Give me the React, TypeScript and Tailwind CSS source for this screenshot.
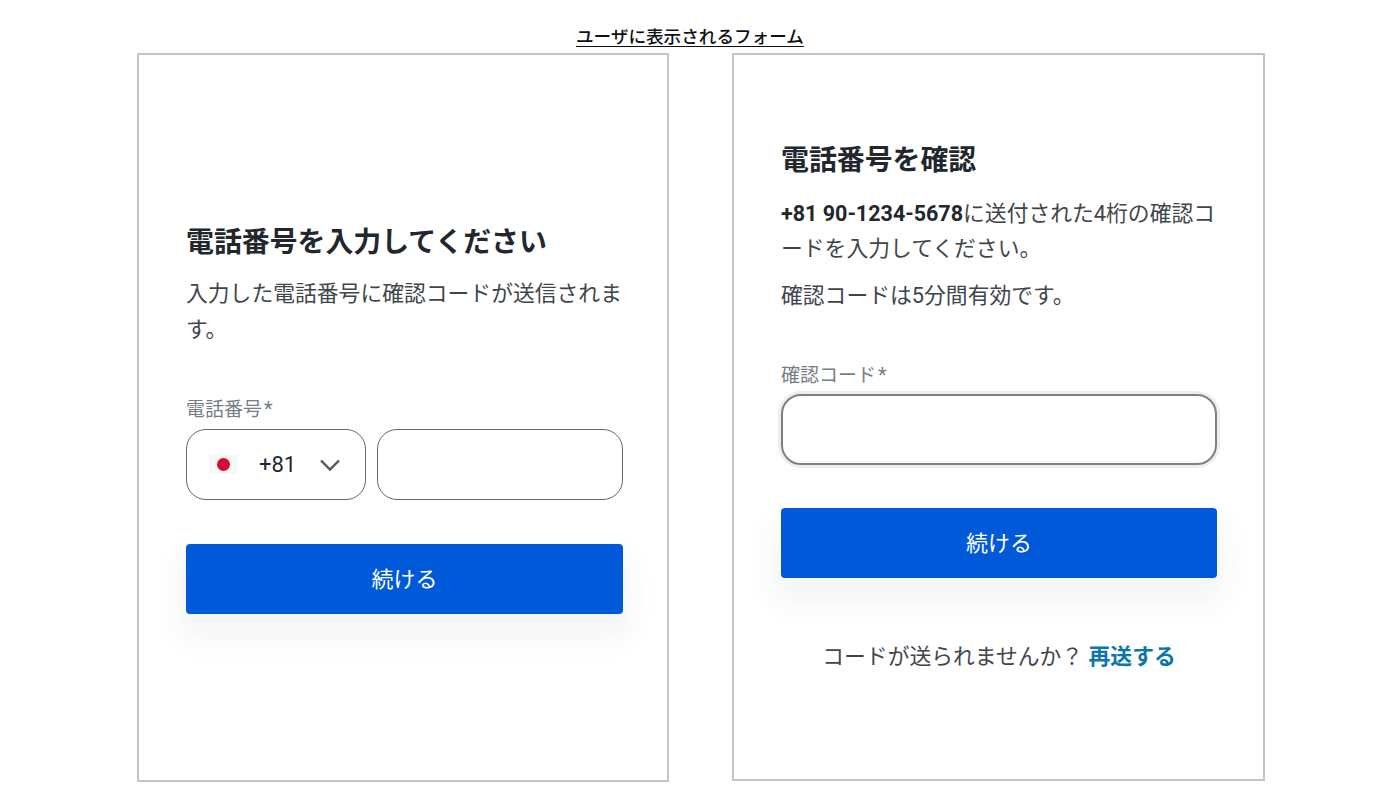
const font = { fontFamily: 'Roboto, "Noto Sans CJK JP", sans-serif' };

function ContinueButton() {
  return (
    <button className="w-full h-[70px] rounded-[4px] bg-[#0059d9] text-white text-[22px] shadow-[0_18px_30px_8px_rgba(30,50,80,0.05)]">
      続ける
    </button>
  );
}

function PhoneCard() {
  return (
    <div className="w-[532px] h-[729px] border-2 border-[#c4c4c4] pl-[47px] pr-[44px] pt-[168px] shrink-0">
      <h2 className="text-[27.9px] leading-[40px] font-bold text-[#22272d]">電話番号を入力してください</h2>
      <p className="mt-[13px] text-[21.8px] leading-[36px] text-[#3f454c]">入力した電話番号に確認コードが送信されます。</p>
      <label className="block mt-[48px] text-[19px] leading-[26px] text-[#777d84]">
        電話番号<span className="ml-[2px] text-[20px]">*</span>
      </label>
      <div className="mt-[6px] flex gap-[11px]">
        <div className="w-[180px] h-[71px] border border-[#666666] rounded-[20px] flex items-center pl-[22px] shrink-0">
          <div className="w-[29px] h-[19px] bg-[#f7f7f7] flex items-center justify-center">
            <div className="w-[13px] h-[13px] rounded-full bg-[#d30a36]" />
          </div>
          <span className="ml-[21px] text-[22px] text-[#22272d]">+81</span>
          <svg className="ml-[23px]" width="22" height="14" viewBox="0 0 22 14" fill="none" stroke="#50575f" strokeWidth="2.4">
            <path d="M2 2.5 L11 11.5 L20 2.5" />
          </svg>
        </div>
        <div className="flex-1 h-[71px] border border-[#666666] rounded-[20px]" />
      </div>
      <div className="mt-[44px]">
        <ContinueButton />
      </div>
    </div>
  );
}

function VerifyCard() {
  return (
    <div className="w-[533px] h-[728px] border-2 border-[#c4c4c4] pl-[47px] pr-[46px] pt-[86px] shrink-0">
      <h2 className="text-[27.9px] leading-[40px] font-bold text-[#22272d]">電話番号を確認</h2>
      <p className="mt-[15px] text-[21.8px] leading-[35px] text-[#3f454c]">
        <span className="text-[21.5px] font-bold text-[#22272d]">+81 90-1234-5678</span>に送付された4桁の確認コードを入力してください。
      </p>
      <p className="mt-[12px] text-[21.8px] leading-[36px] text-[#3f454c]">確認コードは5分間有効です。</p>
      <label className="block mt-[48px] text-[19px] leading-[26px] text-[#777d84]">
        確認コード<span className="ml-[2px] text-[20px]">*</span>
      </label>
      <div className="mt-[5px] h-[71px] border-2 border-[#808080] rounded-[20px] shadow-[0_0_0_3px_#eeeeee]" />
      <div className="mt-[43px]">
        <ContinueButton />
      </div>
      <p className="mt-[61px] text-center text-[21.8px] leading-[36px] text-[#3f454c]">
        コードが送られませんか？ <span className="font-bold text-[#0b76ad]">再送する</span>
      </p>
    </div>
  );
}

export default function App() {
  return (
    <div className="w-[1400px] h-[800px] bg-white overflow-hidden pt-[25px]" style={font}>
      <div className="h-[27px] pl-[576px] flex">
        <span className="text-[17.6px] leading-[24px] font-medium text-[#111111] underline underline-offset-[3px]">ユーザに表示されるフォーム</span>
      </div>
      <div className="mt-[1px] pl-[137px] flex gap-[63px]">
        <PhoneCard />
        <VerifyCard />
      </div>
    </div>
  );
}
